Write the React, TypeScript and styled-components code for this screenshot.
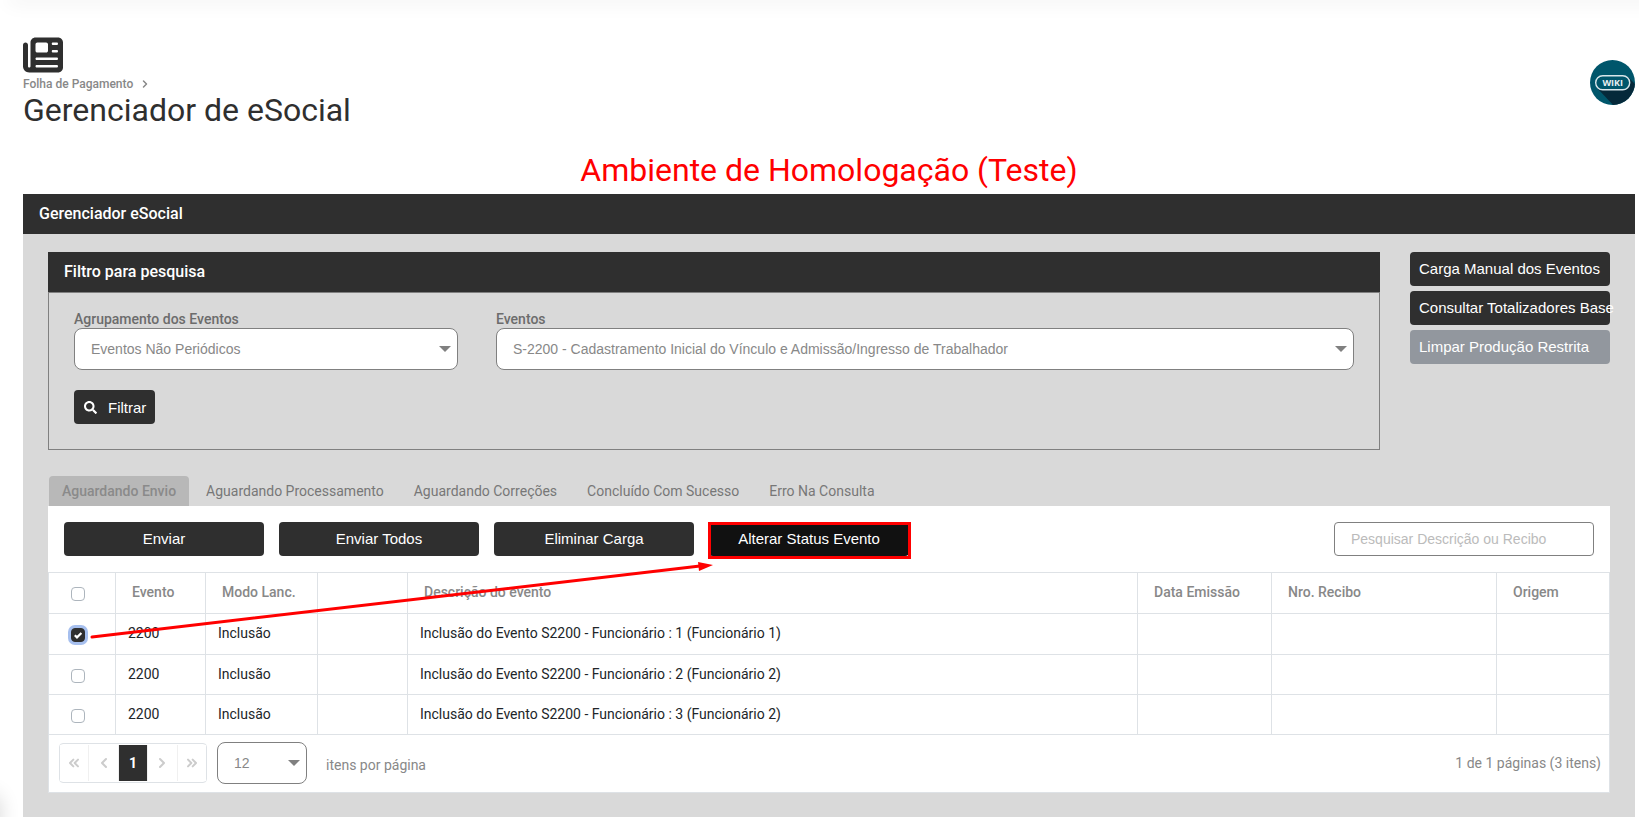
import React from 'react';
import styled, { createGlobalStyle } from 'styled-components';
import { FaSearch } from 'react-icons/fa';
import { FaNewspaper } from 'react-icons/fa6';
import { FiChevronRight, FiChevronLeft, FiChevronsLeft, FiChevronsRight } from 'react-icons/fi';

const dark = '#2f2f2f';
const line = '#dee2e6';
const arial = "'Liberation Sans', Arial, sans-serif";

const GlobalStyle = createGlobalStyle`
  *, *::before, *::after { box-sizing: border-box; }
  body { margin: 0; background: #fff; color: #212529; font: 14px/20px Roboto, sans-serif; }
  button, input, select { font-family: ${arial}; margin: 0; }
  h1, h2, h3, p { margin: 0; }
`;

const Page = styled.div`
  position: relative;
  display: flex;
  flex-direction: column;
  min-height: 100vh;
  overflow: hidden;
  padding: 35px 4px 0 23px;
`;

const TopShade = styled.div`
  position: absolute;
  top: -4px;
  left: 8px;
  right: -20px;
  height: 4px;
  box-shadow: 0 0 20px rgba(0, 0, 0, 0.16);
`;

const CornerShade = styled.div`
  position: absolute;
  left: -24px;
  bottom: -16px;
  width: 24px;
  height: 40px;
  border-radius: 12px;
  box-shadow: 0 0 20px rgba(0, 0, 0, 0.16);
`;

const PageHeader = styled.header`
  display: flex;
  justify-content: space-between;
  align-items: flex-start;
`;

const HeaderIcon = styled(FaNewspaper)`
  display: block;
  color: ${dark};
`;

const Breadcrumb = styled.nav`
  display: flex;
  align-items: center;
  gap: 6px;
  height: 18px;
  font-size: 12px;
  font-weight: 500;
  color: #888;
  a { color: inherit; text-decoration: none; }
`;

const PageTitle = styled.h1`
  font-size: 32px;
  line-height: 34px;
  font-weight: 400;
  color: ${dark};
`;

const WikiLink = styled.a`
  display: block;
  margin-top: 25px;
  height: 45px;
`;

const Environment = styled.h2`
  margin-top: 23px;
  text-align: center;
  font-size: 32px;
  line-height: 40px;
  font-weight: 400;
  color: #f00;
`;

const Panel = styled.section`
  flex: 1;
  margin-top: 4px;
  background: #d9d9d9;
`;

const BarTitle = styled.h3`
  height: 40px;
  padding: 0 16px;
  background: ${dark};
  color: #fff;
  font-size: 16px;
  line-height: 40px;
  font-weight: 500;
`;

const PanelBody = styled.div`
  padding: 18px 25px 25px;
`;

const TopRow = styled.div`
  display: flex;
  align-items: flex-start;
  gap: 30px;
`;

const FilterCard = styled.section`
  flex: 1;
`;

const FilterForm = styled.form`
  border: 1px solid #808080;
  padding: 18px 25px 25px;
`;

const FieldRow = styled.div`
  display: flex;
  gap: 38px;
`;

const Field = styled.div<{ $basis?: string }>`
  flex: ${p => (p.$basis ? `0 0 ${p.$basis}` : '1')};
`;

const FieldLabel = styled.label`
  display: block;
  height: 17px;
  line-height: 17px;
  font-weight: 500;
  color: #6c6c6c;
`;

const SelectBox = styled.div<{ $width?: string }>`
  position: relative;
  width: ${p => p.$width ?? '100%'};
  svg { position: absolute; right: 7px; top: 18px; pointer-events: none; }
`;

const StyledSelect = styled.select`
  display: block;
  appearance: none;
  width: 100%;
  height: 42px;
  padding: 0 24px 0 16px;
  border: 1px solid #808080;
  border-radius: 8px;
  background: #fff;
  color: #888;
  font-size: 14px;
`;

const Button = styled.button<{ $wide?: boolean; $align?: string; $tone?: string }>`
  width: ${p => (p.$wide ? '200px' : 'auto')};
  height: 34px;
  padding: 0 9px 2px;
  border: 0;
  border-radius: 4px;
  background: ${p => p.$tone ?? dark};
  color: #fff;
  font-size: 15px;
  text-align: ${p => p.$align ?? 'center'};
  white-space: nowrap;
`;

const FilterButton = styled(Button)`
  display: flex;
  align-items: center;
  gap: 11px;
  margin-top: 20px;
  padding: 0 9px 0 10px;
`;

const SideActions = styled.div`
  display: flex;
  flex-direction: column;
  gap: 5px;
`;

const Tabs = styled.div`
  display: flex;
  gap: 4px;
  margin-top: 26px;
  padding-left: 1px;
`;

const Tab = styled.button<{ $active?: boolean }>`
  && { font-family: Roboto, sans-serif; }
  height: 30px;
  padding: 0 13px;
  border: 0;
  border-radius: 4px 4px 0 0;
  background: ${p => (p.$active ? '#b8b8b8' : 'transparent')};
  color: ${p => (p.$active ? '#8a8a8a' : '#777')};
  font-size: 14px;
  font-weight: ${p => (p.$active ? 500 : 400)};
`;

const TabPanel = styled.div`
  position: relative;
  background: #fff;
`;

const Toolbar = styled.div`
  display: flex;
  align-items: center;
  gap: 15px;
  padding: 16px;
`;

const Highlight = styled.div`
  position: relative;
  &::after {
    content: '';
    position: absolute;
    inset: 0 -2px -3px -1px;
    border: 3px solid #f00;
    pointer-events: none;
  }
`;

const SearchInput = styled.input`
  width: 260px;
  height: 34px;
  margin-left: auto;
  padding: 0 16px;
  border: 1px solid #808080;
  border-radius: 4px;
  background: #fff;
  font-size: 14px;
  &::placeholder { color: #bbb; opacity: 1; }
`;

const Grid = styled.table`
  width: 100%;
  table-layout: fixed;
  border-collapse: collapse;
  border: 1px solid ${line};
  tbody tr:first-child td { height: 41px; }
`;

const Head = styled.th`
  height: 41px;
  padding: 0 16px 2px;
  border: 1px solid ${line};
  text-align: left;
  font-weight: 500;
  color: #888;
`;

const Cell = styled.td`
  height: 40px;
  padding: 0 12px 2px;
  border: 1px solid ${line};
`;

const CheckWrap = styled.div`
  display: flex;
  justify-content: center;
  padding: 4px 8px 0 0;
`;

const Check = styled.input`
  appearance: none;
  display: block;
  width: 14px;
  height: 14px;
  border: 1px solid #adb5bd;
  border-radius: 4px;
  background: #fff;
  &:checked {
    border-color: ${dark};
    background: ${dark} url("data:image/svg+xml,%3Csvg xmlns='http://www.w3.org/2000/svg' viewBox='0 0 12 12'%3E%3Cpath d='M2.8 6.2 5 8.4 9.4 4' fill='none' stroke='%23fff' stroke-width='2.2'/%3E%3C/svg%3E") center / 12px no-repeat;
    box-shadow: 0 0 0 3px #a6bfee;
  }
`;

const Footer = styled.div`
  display: flex;
  align-items: center;
  gap: 10px;
  height: 58px;
  padding: 0 8px 1px 10px;
  border: 1px solid ${line};
  border-top: 0;
  color: #888;
`;

const Pager = styled.div`
  display: flex;
  width: 148px;
  height: 40px;
  padding: 1px 0;
  border: 1px solid ${line};
  border-radius: 4px;
`;

const PageButton = styled.button<{ $active?: boolean }>`
  && { font-family: Roboto, sans-serif; }
  flex: 1;
  display: flex;
  align-items: center;
  justify-content: center;
  padding: 0;
  border: 0;
  border-right: 1px solid #f0f0f0;
  background: ${p => (p.$active ? dark : '#fff')};
  color: ${p => (p.$active ? '#fff' : '#ccc')};
  font-size: 14px;
  font-weight: 700;
  &:last-child { border-right: 0; }
`;

const PerPage = styled.label`
  padding: 4px 0 0 9px;
`;

const Summary = styled.span`
  margin-left: auto;
`;

const Arrow = styled.svg`
  position: absolute;
  left: 0;
  top: 0;
  pointer-events: none;
`;

const Caret = () => (
  <svg width="12" height="6" viewBox="0 0 12 6" aria-hidden="true">
    <path d="M0 0h12L6 6z" fill="#808080" />
  </svg>
);

const WikiBadge = () => (
  <svg width="45" height="45" viewBox="0 0 45 45">
    <defs>
      <clipPath id="disc"><circle cx="22.5" cy="22.5" r="22.5" /></clipPath>
    </defs>
    <g clipPath="url(#disc)">
      <rect width="45" height="45" fill="#00566b" />
      <path d="M38 17 47 26v22H26L7 28z" fill="#05293a" />
      <rect x="5.7" y="15.7" width="34" height="14" rx="7" fill="#00566b" stroke="#d8e6ea" strokeWidth="1.4" />
    </g>
    <text x="22.7" y="25.7" textAnchor="middle" fontFamily="Open Sans, sans-serif" fontSize="9" fontWeight="700" fill="#e8f0f2">WIKI</text>
  </svg>
);

const tabs = ['Aguardando Envio', 'Aguardando Processamento', 'Aguardando Correções', 'Concluído Com Sucesso', 'Erro Na Consulta'];
const heads = ['Evento', 'Modo Lanc.', '', 'Descrição do evento', 'Data Emissão', 'Nro. Recibo', 'Origem'];
const widths = [67, 90, 112, 90, undefined, 134, 225, 113];
const rows = [
  { description: 'Inclusão do Evento S2200 - Funcionário : 1 (Funcionário 1)', checked: true },
  { description: 'Inclusão do Evento S2200 - Funcionário : 2 (Funcionário 2)', checked: false },
  { description: 'Inclusão do Evento S2200 - Funcionário : 3 (Funcionário 2)', checked: false },
];

export default function App() {
  return (
    <Page>
      <GlobalStyle />
      <TopShade />
      <CornerShade />
      <PageHeader>
        <div>
          <HeaderIcon size={40} />
          <Breadcrumb>
            <a href="#folha">Folha de Pagamento</a>
            <FiChevronRight size={12} strokeWidth={3} />
          </Breadcrumb>
          <PageTitle>Gerenciador de eSocial</PageTitle>
        </div>
        <WikiLink href="#wiki" aria-label="Wiki"><WikiBadge /></WikiLink>
      </PageHeader>
      <Environment>Ambiente de Homologação (Teste)</Environment>
      <Panel>
        <BarTitle>Gerenciador eSocial</BarTitle>
        <PanelBody>
          <TopRow>
            <FilterCard>
              <BarTitle>Filtro para pesquisa</BarTitle>
              <FilterForm>
                <FieldRow>
                  <Field $basis="30%">
                    <FieldLabel htmlFor="group">Agrupamento dos Eventos</FieldLabel>
                    <SelectBox>
                      <StyledSelect id="group"><option>Eventos Não Periódicos</option></StyledSelect>
                      <Caret />
                    </SelectBox>
                  </Field>
                  <Field>
                    <FieldLabel htmlFor="event">Eventos</FieldLabel>
                    <SelectBox>
                      <StyledSelect id="event">
                        <option>S-2200 - Cadastramento Inicial do Vínculo e Admissão/Ingresso de Trabalhador</option>
                      </StyledSelect>
                      <Caret />
                    </SelectBox>
                  </Field>
                </FieldRow>
                <FilterButton type="button"><FaSearch size={13} />Filtrar</FilterButton>
              </FilterForm>
            </FilterCard>
            <SideActions>
              <Button $wide $align="left">Carga Manual dos Eventos</Button>
              <Button $wide $align="left">Consultar Totalizadores Base</Button>
              <Button $wide $align="left" $tone="#92979e">Limpar Produção Restrita</Button>
            </SideActions>
          </TopRow>
          <Tabs role="tablist">
            {tabs.map((t, i) => <Tab key={t} role="tab" aria-selected={i === 0} $active={i === 0}>{t}</Tab>)}
          </Tabs>
          <TabPanel>
            <Toolbar>
              <Button $wide>Enviar</Button>
              <Button $wide>Enviar Todos</Button>
              <Button $wide>Eliminar Carga</Button>
              <Highlight><Button $wide $tone="#111">Alterar Status Evento</Button></Highlight>
              <SearchInput aria-label="Pesquisar" placeholder="Pesquisar Descrição ou Recibo" />
            </Toolbar>
            <Grid>
              <colgroup>{widths.map((w, i) => <col key={i} width={w} />)}</colgroup>
              <thead>
                <tr>
                  <Head><CheckWrap><Check type="checkbox" aria-label="Selecionar todos" /></CheckWrap></Head>
                  {heads.map((h, i) => <Head key={i}>{h}</Head>)}
                </tr>
              </thead>
              <tbody>
                {rows.map(r => (
                  <tr key={r.description}>
                    <Cell><CheckWrap><Check type="checkbox" aria-label={r.description} defaultChecked={r.checked} /></CheckWrap></Cell>
                    <Cell>2200</Cell>
                    <Cell>Inclusão</Cell>
                    <Cell />
                    <Cell>{r.description}</Cell>
                    <Cell />
                    <Cell />
                    <Cell />
                  </tr>
                ))}
              </tbody>
            </Grid>
            <Footer>
              <Pager>
                <PageButton aria-label="Primeira página"><FiChevronsLeft size={16} strokeWidth={3} /></PageButton>
                <PageButton aria-label="Página anterior"><FiChevronLeft size={16} strokeWidth={3} /></PageButton>
                <PageButton $active>1</PageButton>
                <PageButton aria-label="Próxima página"><FiChevronRight size={16} strokeWidth={3} /></PageButton>
                <PageButton aria-label="Última página"><FiChevronsRight size={16} strokeWidth={3} /></PageButton>
              </Pager>
              <SelectBox $width="90px">
                <StyledSelect id="size"><option>12</option></StyledSelect>
                <Caret />
              </SelectBox>
              <PerPage htmlFor="size">itens por página</PerPage>
              <Summary>1 de 1 páginas (3 itens)</Summary>
            </Footer>
            <Arrow width="670" height="140" viewBox="0 0 670 140" aria-hidden="true">
              <path d="M44 131 652 60" stroke="#f00" strokeWidth="3" strokeLinecap="round" />
              <path d="M650 56 665 59 651 65z" fill="#f00" />
            </Arrow>
          </TabPanel>
        </PanelBody>
      </Panel>
    </Page>
  );
}
